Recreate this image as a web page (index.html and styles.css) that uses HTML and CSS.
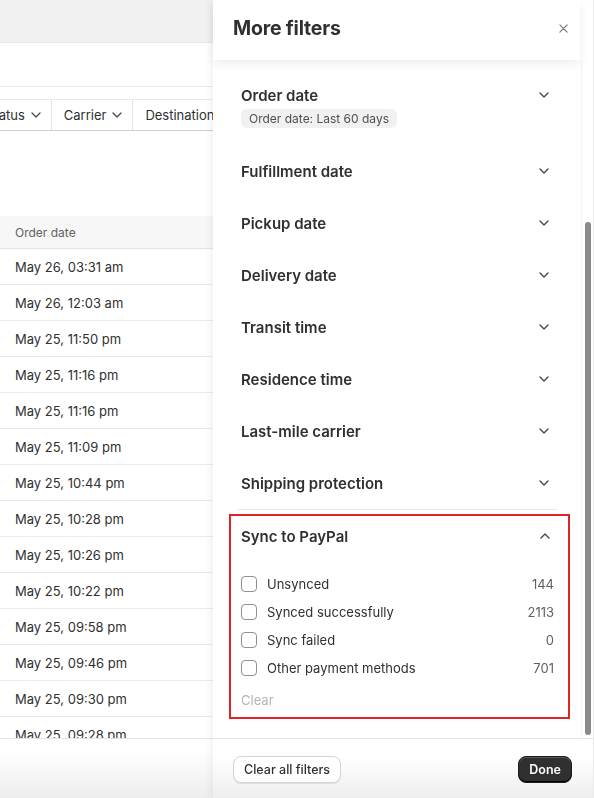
FILE: index.html
```html
<!DOCTYPE html>
<html>
<head>
<meta charset="utf-8">
<link rel="stylesheet" href="styles.css">
</head>
<body>
<div class="page">
  <div class="topbar"></div>
  <div class="toolbar"></div>
  <div class="filters">
    <div class="fbtn first">Status <svg class="chev" viewBox="0 0 10 6"><path d="M1 1l4 4 4-4"/></svg></div>
    <div class="fbtn">Carrier <svg class="chev" viewBox="0 0 10 6"><path d="M1 1l4 4 4-4"/></svg></div>
    <div class="fbtn">Destination</div>
  </div>
  <div class="table">
    <div class="thead">Order date</div>
    <div class="row">May 26, 03:31 am</div>
    <div class="row">May 26, 12:03 am</div>
    <div class="row">May 25, 11:50 pm</div>
    <div class="row">May 25, 11:16 pm</div>
    <div class="row">May 25, 11:16 pm</div>
    <div class="row">May 25, 11:09 pm</div>
    <div class="row">May 25, 10:44 pm</div>
    <div class="row">May 25, 10:28 pm</div>
    <div class="row">May 25, 10:26 pm</div>
    <div class="row">May 25, 10:22 pm</div>
    <div class="row">May 25, 09:58 pm</div>
    <div class="row">May 25, 09:46 pm</div>
    <div class="row">May 25, 09:30 pm</div>
    <div class="row">May 25, 09:28 pm</div>
  </div>
  <div class="pagefoot"></div>
</div>

<aside class="drawer">
  <header class="dhead">
    <h1>More filters</h1>
    <svg class="close" viewBox="0 0 10 10"><path d="M1 1l8 8M9 1l-8 8"/></svg>
  </header>
  <div class="dbody">
    <div class="scroll">
      <div class="sec first">
        <div class="sechead"><span>Order date</span><svg class="chev2" viewBox="0 0 10 6"><path d="M1 1l4 4 4-4"/></svg></div>
        <span class="tag">Order date: Last 60 days</span>
      </div>
      <div class="sec"><div class="sechead"><span>Fulfillment date</span><svg class="chev2" viewBox="0 0 10 6"><path d="M1 1l4 4 4-4"/></svg></div></div>
      <div class="sec"><div class="sechead"><span>Pickup date</span><svg class="chev2" viewBox="0 0 10 6"><path d="M1 1l4 4 4-4"/></svg></div></div>
      <div class="sec"><div class="sechead"><span>Delivery date</span><svg class="chev2" viewBox="0 0 10 6"><path d="M1 1l4 4 4-4"/></svg></div></div>
      <div class="sec"><div class="sechead"><span>Transit time</span><svg class="chev2" viewBox="0 0 10 6"><path d="M1 1l4 4 4-4"/></svg></div></div>
      <div class="sec"><div class="sechead"><span>Residence time</span><svg class="chev2" viewBox="0 0 10 6"><path d="M1 1l4 4 4-4"/></svg></div></div>
      <div class="sec"><div class="sechead"><span>Last-mile carrier</span><svg class="chev2" viewBox="0 0 10 6"><path d="M1 1l4 4 4-4"/></svg></div></div>
      <div class="sec"><div class="sechead"><span>Shipping protection</span><svg class="chev2" viewBox="0 0 10 6"><path d="M1 1l4 4 4-4"/></svg></div></div>
      <div class="divider"></div>
      <div class="open">
        <div class="sechead"><span>Sync to PayPal</span><svg class="chev2" viewBox="0 0 10 6"><path d="M1 5l4-4 4 4"/></svg></div>
        <ul class="opts">
          <li><span class="cb"></span><span class="lbl">Unsynced</span><span class="cnt">144</span></li>
          <li><span class="cb"></span><span class="lbl">Synced successfully</span><span class="cnt">2113</span></li>
          <li><span class="cb"></span><span class="lbl">Sync failed</span><span class="cnt">0</span></li>
          <li><span class="cb"></span><span class="lbl">Other payment methods</span><span class="cnt">701</span></li>
        </ul>
        <div class="clear">Clear</div>
      </div>
    </div>
    <div class="gutter"><div class="thumb"></div></div>
  </div>
  <footer class="dfoot">
    <button class="btn">Clear all filters</button>
    <button class="btn primary">Done</button>
  </footer>
</aside>
</body>
</html>
```

FILE: styles.css
```css
* { box-sizing: border-box; }
html, body { margin: 0; padding: 0; }
body {
  width: 594px;
  height: 798px;
  overflow: hidden;
  font-family: Inter, "Noto Sans", "Liberation Sans", sans-serif;
  color: #303030;
  background: #fff;
}
.page { width: 594px; height: 798px; display: flex; flex-direction: column; }
.topbar { height: 43px; background: #f1f1f1; border-bottom: 1px solid #e6e6e6; flex: none; }
.toolbar { height: 44px; border-bottom: 1px solid #ebebeb; flex: none; }
.filters {
  margin-top: 12px;
  height: 32px;
  flex: none;
  display: flex;
  border-top: 1px solid #ebebeb;
  border-bottom: 1px solid #cfcfcf;
  margin-left: -14px;
}
.fbtn {
  display: flex;
  align-items: center;
  gap: 6px;
  padding: 0 10px 0 12px;
  font-size: 13px;
  border-right: 1px solid #e3e3e3;
  white-space: nowrap;
}
.fbtn.first { padding-left: 0; }
.chev { width: 10px; height: 6px; fill: none; stroke: #4a4a4a; stroke-width: 1.3; stroke-linecap: round; stroke-linejoin: round; }
.table { margin-top: 85px; flex: 1; overflow: hidden; }
.thead {
  height: 33px;
  background: #f7f7f7;
  border-bottom: 1px solid #e3e3e3;
  font-size: 12px;
  color: #616161;
  padding-left: 15px;
  display: flex;
  align-items: center;
}
.row {
  height: 36px;
  border-bottom: 1px solid #ebebeb;
  font-size: 13px;
  padding-left: 15px;
  display: flex;
  align-items: center;
}
.pagefoot {
  height: 60px;
  flex: none;
  border-top: 1px solid #e3e3e3;
  background: linear-gradient(#fff 20%, #ededed);
}

.drawer {
  position: fixed;
  top: 0;
  right: 0;
  width: 381px;
  height: 798px;
  background: #fff;
  display: flex;
  flex-direction: column;
  box-shadow: -3px 0 8px rgba(0,0,0,0.05);
  border-right: 1px solid #ebebeb;
}
.dhead {
  height: 60px;
  flex: none;
  display: flex;
  align-items: center;
  justify-content: space-between;
  padding: 0 12px 4px 20px;
  position: relative;
  z-index: 1;
  box-shadow: 0 4px 10px rgba(0,0,0,0.07);
  margin-right: 13px;
}
.dhead h1 { margin: 0; font-size: 19.5px; font-weight: 700; letter-spacing: -0.2px; }
.close { width: 9px; height: 9px; fill: none; stroke: #7a7a7a; stroke-width: 1.3; stroke-linecap: round; }
.dbody { flex: 1; display: flex; min-height: 0; }
.scroll { flex: 1; padding: 9px 11px 0 16px; overflow: hidden; }
.gutter { width: 12px; flex: none; border-left: 1px solid #f3f3f3; padding-left: 3px; }
.thumb { width: 6px; height: 513px; margin-top: 162px; border-radius: 3px; background: #8a8a8a; }
.sec { padding: 16px 19px 16px 12px; }
.sec.first { padding-bottom: 17px; }
.sechead {
  display: flex;
  align-items: center;
  justify-content: space-between;
  height: 20px;
  font-size: 15px;
  font-weight: 600;
}
.chev2 { width: 10px; height: 6px; fill: none; stroke: #4a4a4a; stroke-width: 1.4; stroke-linecap: round; stroke-linejoin: round; margin-right: 2px; }
.tag {
  display: inline-block;
  margin-top: 4px;
  height: 19px;
  line-height: 19px;
  padding: 0 8px;
  border-radius: 6px;
  background: #f1f1f1;
  font-size: 12px;
  color: #4f4f4f;
}
.divider { height: 1px; background: #ebebeb; margin: 0 13px 0 8px; }
.open {
  margin-top: 4px;
  border: 2px solid #e02424;
  padding: 10px 14px 7px 10px;
}
.open .sechead { margin-right: 2px; }
.opts { list-style: none; margin: 24px 0 0; padding: 0; }
.opts li { display: flex; align-items: center; height: 28px; font-size: 13px; }
.cb { width: 16px; height: 16px; border: 1px solid #8f8f8f; border-radius: 4px; margin: 0 10px 0 0; flex: none; }
.lbl { flex: 1; }
.cnt { color: #616161; }
.clear { font-size: 13px; color: #b5b5b5; margin-top: 8px; height: 20px; line-height: 20px; }
.dfoot {
  height: 60px;
  flex: none;
  border-top: 1px solid #e3e3e3;
  display: flex;
  align-items: center;
  justify-content: space-between;
  padding: 0 21px 0 20px;
  background: linear-gradient(#fff 30%, #eeeeee);
}
.btn {
  font-family: inherit;
  font-size: 12.5px;
  font-weight: 500;
  color: #303030;
  height: 27px;
  padding: 0 10px;
  border: 1px solid #d4d4d4;
  border-radius: 8px;
  background: #fff;
  box-shadow: 0 1px 0 rgba(0,0,0,0.08);
  margin-top: 2px;
}
.btn.primary {
  background: #303030;
  color: #fff;
  border-color: #1a1a1a;
  font-weight: 600;
  padding: 0 10px;
  box-shadow: inset 0 -1px 0 #000, inset 0 1px 0 rgba(255,255,255,0.2);
}
```
